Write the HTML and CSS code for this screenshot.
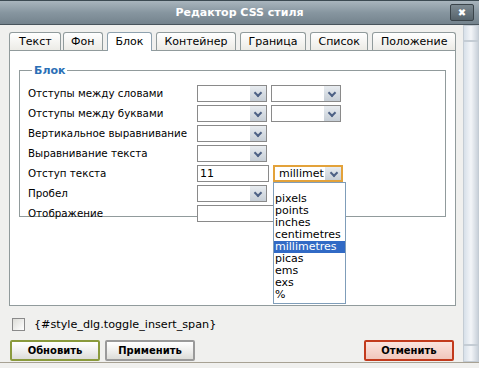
FILE: index.html
```html
<!DOCTYPE html>
<html lang="ru">
  <head>
    <meta charset="utf-8">
    <title>Редактор CSS стиля</title>
    <link rel="stylesheet" href="styles.css">
  </head>
  <body>
    <div class="window">
      <div class="titlebar">
        <span class="title">Редактор CSS стиля</span>
        <span class="close">&#x2716;</span>
      </div>
      <div class="frame">
        <div class="content">
          <ul class="tabs">
            <li class="tab">Текст</li>
            <li class="tab">Фон</li>
            <li class="tab current">Блок</li>
            <li class="tab">Контейнер</li>
            <li class="tab">Граница</li>
            <li class="tab">Список</li>
            <li class="tab">Положение</li>
          </ul>
          <div class="panel">
            <fieldset class="group">
              <legend>Блок</legend>
              <div class="row">
                <label>Отступы между словами</label>
                <span class="select"></span>
                <span class="select"></span>
              </div>
              <div class="row">
                <label>Отступы между буквами</label>
                <span class="select"></span>
                <span class="select"></span>
              </div>
              <div class="row">
                <label>Вертикальное выравнивание</label>
                <span class="select"></span>
              </div>
              <div class="row">
                <label>Выравнивание текста</label>
                <span class="select"></span>
              </div>
              <div class="row">
                <label>Отступ текста</label>
                <span class="input">11</span>
                <span class="select open"><span class="value">millimet</span>
                  <ul class="options">
                    <li>&nbsp;</li>
                    <li>pixels</li>
                    <li>points</li>
                    <li>inches</li>
                    <li>centimetres</li>
                    <li class="selected">millimetres</li>
                    <li>picas</li>
                    <li>ems</li>
                    <li>exs</li>
                    <li>%</li>
                  </ul>
                </span>
              </div>
              <div class="row">
                <label>Пробел</label>
                <span class="select"></span>
              </div>
              <div class="row">
                <label>Отображение</label>
                <span class="input wide"></span>
              </div>
            </fieldset>
          </div>
          <div class="toggle">
            <span class="checkbox"></span>
            <span>{#style_dlg.toggle_insert_span}</span>
          </div>
          <div class="buttons">
            <button class="btn update">Обновить</button>
            <button class="btn apply">Применить</button>
            <button class="btn cancel">Отменить</button>
          </div>
        </div>
        <div class="strip">
          <div class="strip-top"></div>
          <div class="strip-mid"></div>
          <div class="strip-bottom"></div>
        </div>
      </div>
      <div class="footer"></div>
    </div>
  </body>
</html>
```

FILE: styles.css
```css
html, body {
  margin: 0;
  padding: 0;
}

* {
  box-sizing: border-box;
}

body {
  width: 479px;
  height: 368px;
  overflow: hidden;
  background: #f0f0ee;
  font-family: "DejaVu Sans", Verdana, sans-serif;
  font-size: 10.3px;
  color: #000;
}

.window {
  display: flex;
  flex-direction: column;
  height: 368px;
}

.titlebar {
  position: relative;
  height: 25px;
  border-top: 1px solid #3c4a52;
  border-bottom: 1px solid #48545c;
  background: linear-gradient(#a9b5bd, #8796a0 50%, #74838d);
  display: flex;
  align-items: center;
  justify-content: center;
}

.title {
  color: #fff;
  font-weight: bold;
  font-size: 11px;
}

.close {
  position: absolute;
  right: 5px;
  top: 3px;
  width: 24px;
  height: 17px;
  border: 1px solid #3a444a;
  border-radius: 2px;
  background: linear-gradient(#7d8a92, #56636b);
  color: #fff;
  font-size: 10px;
  line-height: 15px;
  text-align: center;
}

.frame {
  flex: 1;
  display: flex;
}

.content {
  width: 463px;
  padding: 6px 0 0 9px;
  display: flex;
  flex-direction: column;
}

.tabs {
  display: flex;
  align-items: flex-end;
  margin: 0;
  padding: 0;
  list-style: none;
  height: 19px;
}

.tab {
  height: 18px;
  margin-right: 4px;
  padding: 0 7.5px;
  border: 1px solid #919b9c;
  border-bottom: none;
  border-radius: 3px 3px 0 0;
  background: linear-gradient(#fff, #ecebe6);
  line-height: 17px;
  font-size: 11px;
}

.tab:first-child {
  padding: 0 8px 0 9px;
  margin-right: 2px;
}

.tab.current {
  height: 19px;
  background: #fff;
  border-color: #8ea1ae;
  margin-bottom: -1px;
  position: relative;
}

.panel {
  width: 447px;
  height: 256px;
  border: 1px solid #919b9c;
  background: #fff;
  padding: 13px 9px 0 9px;
}

.group {
  margin: 0;
  padding: 6px 0 2px 8px;
  border: 1px solid #919b9c;
  height: 153px;
}

.group legend {
  color: #2b6fb6;
  font-weight: bold;
  font-size: 11px;
  padding: 0 2px;
  margin-left: 4px;
}

.row {
  display: flex;
  align-items: center;
  height: 20px;
}

.row label {
  width: 169px;
}

.select {
  position: relative;
  width: 70px;
  height: 17px;
  margin-right: 4px;
  border: 1px solid #8a8a8a;
  background: #fff;
  padding-left: 5px;
  line-height: 15px;
  font-size: 11px;
}

.select::after {
  content: "";
  position: absolute;
  right: 0;
  top: 0;
  width: 16px;
  height: 15px;
  background: linear-gradient(#e8ecf0, #c6ced6);
  border-left: 1px solid #fff;
}

.select::before {
  content: "";
  position: absolute;
  right: 5px;
  top: 4px;
  width: 4px;
  height: 4px;
  border-right: 2px solid #4d6185;
  border-bottom: 2px solid #4d6185;
  transform: rotate(45deg);
  z-index: 1;
}

.select.open {
  border: 2px solid #e3a23a;
  line-height: 13px;
  margin-left: 4px;
  padding-left: 4px;
}

.select.open::after {
  height: 13px;
}

.select.open::before {
  top: 3px;
  right: 4px;
}

.select .value {
  display: block;
  width: 47px;
  overflow: hidden;
  white-space: nowrap;
}

.input {
  width: 72px;
  height: 17px;
  border: 1px solid #8a8a8a;
  background: #fff;
  padding-left: 2px;
  line-height: 15px;
  font-size: 11px;
}

.input.wide {
  width: 78px;
}

.options {
  position: absolute;
  left: -2px;
  top: 15px;
  width: 73px;
  margin: 0;
  padding: 0 0 2px 0;
  list-style: none;
  border: 1px solid #7f9db9;
  background: #fff;
  z-index: 2;
}

.options li {
  height: 12px;
  line-height: 12px;
  padding-left: 1px;
  font-size: 11px;
  white-space: nowrap;
}

.options li:first-child {
  height: 10px;
}

.options li.selected {
  background: #316ac5;
  color: #fff;
}

.toggle {
  display: flex;
  align-items: center;
  height: 16px;
  margin-top: 10px;
  margin-left: 3px;
  font-size: 11.2px;
}

.checkbox {
  width: 13px;
  height: 13px;
  margin-right: 9px;
  border: 1px solid #8a8a8a;
  background: linear-gradient(135deg, #dcdcd7, #fff);
}

.buttons {
  display: flex;
  margin-top: 8px;
  margin-left: 1px;
}

.btn {
  width: 90px;
  height: 21px;
  margin-right: 5px;
  padding: 0;
  border: 2px solid #999;
  border-radius: 2px;
  background: linear-gradient(#fff, #ececea 60%, #dcdcd8);
  font-family: "DejaVu Sans", Verdana, sans-serif;
  font-weight: bold;
  font-size: 10px;
  color: #000;
}

.btn.update {
  border-color: #8a9a3c;
}

.btn.apply {
  border-color: #9a9a9a;
}

.btn.cancel {
  margin-left: auto;
  margin-right: 9px;
  border-color: #c23a1c;
  background: linear-gradient(#fbe4de, #f1c6bc);
}

.strip {
  width: 16px;
  display: flex;
  flex-direction: column;
}

.strip > div {
  border: 1px solid #c4ccd4;
  background: linear-gradient(90deg, #d7e0e9, #f3f5f8 50%, #c9d1da);
}

.strip-top {
  height: 16px;
}

.strip-mid {
  flex: 1;
}

.strip-bottom {
  height: 17px;
}

.footer {
  height: 6px;
  border-top: 1px solid #a7a193;
  background: #f0f0ee;
}
```
